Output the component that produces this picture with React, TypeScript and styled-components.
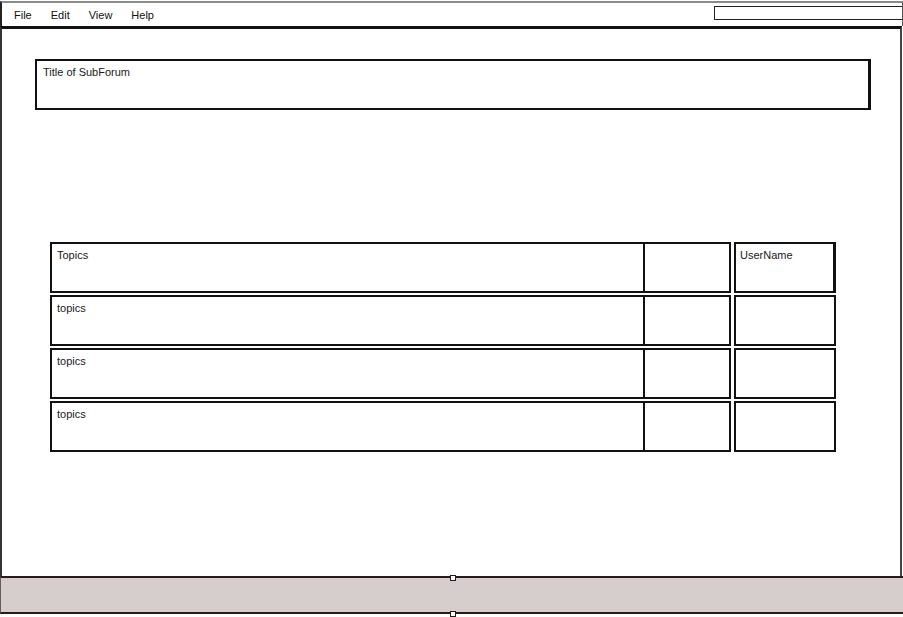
import styled, { createGlobalStyle } from 'styled-components';

const GlobalStyle = createGlobalStyle`
	html, body {
		margin: 0;
		padding: 0;
		background: #ffffff;
	}
	body {
		font-family: 'Liberation Sans', Arial, sans-serif;
		color: #1a1a1a;
	}
`;

const rows = ['topics', 'topics', 'topics'];

const App = () => {
	return (
		<>
			<GlobalStyle />
			<WindowStyles>
				<MenuBarStyles>
					<MenuStyles>
						<span>File</span>
						<span>Edit</span>
						<span>View</span>
						<span>Help</span>
					</MenuStyles>
					<SearchStyles />
				</MenuBarStyles>
				<FrameStyles>
					<TitleStyles>Title of SubForum</TitleStyles>
					<TableStyles>
						<CellStyles $wide>Topics</CellStyles>
						<CellStyles />
						<CellStyles $last $heavy>UserName</CellStyles>
						{rows.map((row, index) => (
							<RowGroup key={index} label={row} />
						))}
					</TableStyles>
				</FrameStyles>
				<FooterStyles>
					<HandleStyles $side='top' />
					<HandleStyles $side='bottom' />
				</FooterStyles>
				<BottomGap />
			</WindowStyles>
		</>
	);
};

const RowGroup = ({ label }: { label: string }) => (
	<>
		<CellStyles $wide>{label}</CellStyles>
		<CellStyles />
		<CellStyles $last />
	</>
);

export default App;

const WindowStyles = styled.div`
	width: 903px;
	height: 617px;
	display: flex;
	flex-direction: column;
	box-sizing: border-box;
	overflow: hidden;
`;

const MenuBarStyles = styled.div`
	display: flex;
	align-items: center;
	justify-content: space-between;
	height: 25px;
	margin-top: 1px;
	border-top: 2px solid #8a8a8a;
	border-left: 2px solid #222;
	border-right: 1px solid #555;
	box-sizing: border-box;
	padding-left: 12px;
`;

const MenuStyles = styled.div`
	display: flex;
	gap: 19px;
	font-size: 11px;
	color: #111;
	padding-top: 1px;
`;

const SearchStyles = styled.div`
	width: 188px;
	height: 14px;
	margin-bottom: 3px;
	border: 1px solid #222;
	border-right: none;
	box-sizing: border-box;
`;

const FrameStyles = styled.div`
	flex: 1;
	border-top: 3px solid #111;
	border-left: 2px solid #333;
	border-right: 2px solid #444;
	margin-right: 1px;
	padding: 30px 0 0 33px;
	box-sizing: border-box;
`;

const TitleStyles = styled.div`
	width: 836px;
	height: 51px;
	border: 2px solid #111;
	border-right-width: 3px;
	box-sizing: border-box;
	padding: 5px 6px;
	font-size: 11px;
`;

const TableStyles = styled.div`
	display: grid;
	grid-template-columns: 595px 86px 105px;
	grid-auto-rows: 51px;
	row-gap: 2px;
	margin: 132px 0 0 15px;
`;

const CellStyles = styled.div<{ $wide?: boolean; $heavy?: boolean; $last?: boolean }>`
	border: 2px solid #111;
	border-left-width: ${({ $wide, $last }) => ($wide || $last ? '2px' : '0')};
	border-right-width: ${({ $heavy }) => ($heavy ? '3px' : '2px')};
	margin-left: ${({ $last }) => ($last ? '3px' : '0')};
	box-sizing: border-box;
	padding: ${({ $wide }) => ($wide ? '5px 5px' : '5px 4px')};
	font-size: 11px;
	color: #1a1a1a;
`;

const FooterStyles = styled.div`
	position: relative;
	height: 38px;
	flex-shrink: 0;
	background: #d5cecc;
	border-top: 2px solid #2b1b18;
	border-bottom: 2px solid #2b1b18;
	border-left: 1px solid #6b5a57;
	box-sizing: border-box;
`;

const HandleStyles = styled.span<{ $side: 'top' | 'bottom' }>`
	position: absolute;
	left: 449px;
	${({ $side }) => ($side === 'top' ? 'top: -3px;' : 'bottom: -5px;')}
	width: 4px;
	height: 4px;
	background: #fff;
	border: 1px solid #2b1b18;
`;

const BottomGap = styled.div`
	height: 3px;
	flex-shrink: 0;
`;
